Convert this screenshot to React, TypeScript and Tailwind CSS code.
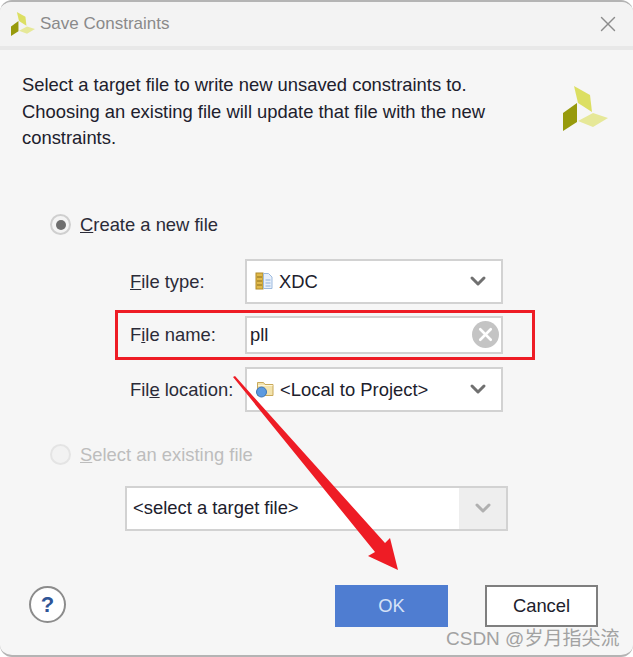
import { ChevronDown, X } from "lucide-react";
import type { ReactNode } from "react";

function Logo({ className }: { className: string }) {
  return (
    <svg className={className} viewBox="0 0 45 45">
      <polygon points="11,0 27,9 29,26 15,17" fill="#dcdf62" />
      <polygon points="14,17 14,36 0,45 0,27" fill="#979a0c" />
      <polygon points="30,27 45,32 30,41 15,35" fill="#e6e898" />
    </svg>
  );
}

function FileTypeIcon() {
  return (
    <svg className="w-[18px] h-[18px] shrink-0" viewBox="0 0 18 18">
      <rect x="1" y="1" width="7" height="16" fill="#e0b94a" stroke="#b08a28" />
      <path d="M2 5h5M2 9h5M2 13h5" stroke="#8a6c1c" />
      <path d="M8.500 1.500h5l3.500 3.500v11.500h-8.500z" fill="#e8f0fb" stroke="#9dbade" />
      <path d="M10.500 8h5M10.500 11h5M10.500 14h5" stroke="#8fb0da" />
    </svg>
  );
}

function FolderIcon() {
  return (
    <svg className="w-[19px] h-[18px] shrink-0" viewBox="0 0 19 18">
      <path d="M2.500 2.500h6l1.500 2h8v11h-15.500z" fill="#f3e3ad" stroke="#c9a95a" />
      <path d="M3 5.500h14.500" stroke="#fff6d8" />
      <circle cx="6.500" cy="12" r="5" fill="#5c9ae0" stroke="#3d75b5" />
    </svg>
  );
}

function Combo({ icon, label }: { icon: ReactNode; label: string }) {
  return (
    <div className="w-[258px] h-[45px] bg-white border-2 border-[#d2d2d2] flex items-center pl-[8px] pr-[11px]">
      {icon}
      <span className="ml-[6px] flex-1 text-[#20202c] pt-[1px]">{label}</span>
      <ChevronDown className="w-[24px] h-[24px] text-[#707070]" strokeWidth={3} />
    </div>
  );
}

function FieldLabel({ children }: { children: ReactNode }) {
  return <div className="w-[115px] pt-[1px] text-[#2b2b38]">{children}</div>;
}

export default function App() {
  return (
    <div className="relative w-[633px] h-[657px] bg-white overflow-hidden font-['Liberation_Sans',sans-serif] text-[18.400px]">
      <div className="w-[633px] h-[657px] flex flex-col bg-[#f6f6f6] rounded-[12px] border-t-2 border-b-2 border-[#b4b4b4] overflow-hidden">
        <div className="h-[44px] shrink-0 bg-[#f3f3f3] flex items-center pl-[11px] pr-[12px]">
          <Logo className="w-[24px] h-[24px]" />
          <span className="ml-[5px] flex-1 text-[#8a8a8a] text-[17px]">Save Constraints</span>
          <X className="w-[26px] h-[26px] text-[#8c8c8c]" strokeWidth={1.300} />
        </div>
        <div className="h-[4px] shrink-0 bg-[#e8e8e8]" />

        <div className="flex-1 flex flex-col">
          <div className="flex justify-between pl-[22px] pr-[25px] pt-[22px]">
            <p className="w-[500px] leading-[26.500px] text-[#20202c]">
              Select a target file to write new unsaved constraints to.
              <br />
              Choosing an existing file will update that file with the new
              <br />
              constraints.
            </p>
            <Logo className="w-[45px] h-[45px] mt-[14px] shrink-0" />
          </div>

          <div className="flex items-center mt-[61px] ml-[50px] h-[24px]">
            <span className="w-[21px] h-[21px] rounded-full border-2 border-[#cfcfcf] bg-[#f4f4f4] flex items-center justify-center">
              <span className="w-[10px] h-[10px] rounded-full bg-[#6e6e6e]" />
            </span>
            <span className="ml-[9px] text-[#2b2b38]">
              <u>C</u>reate a new file
            </span>
          </div>

          <div className="ml-[115px] mt-[22px] w-[420px] flex flex-col">
            <div className="flex items-center pl-[15px]">
              <FieldLabel>
                <u>F</u>ile type:
              </FieldLabel>
              <Combo icon={<FileTypeIcon />} label="XDC" />
            </div>
            <div className="flex items-center pl-[12px] mt-[6px] h-[50px] border-[3px] border-[#ee1c25]">
              <FieldLabel>
                F<u>i</u>le name:
              </FieldLabel>
              <div className="w-[258px] h-[38px] bg-white border-2 border-[#d2d2d2] flex items-center pl-[3px] pr-[2px]">
                <span className="flex-1 pt-[1px] text-[#20202c]">pll</span>
                <span className="w-[27px] h-[27px] rounded-full bg-[#c4c4c4] flex items-center justify-center">
                  <X className="w-[21px] h-[21px] text-white" strokeWidth={3} />
                </span>
              </div>
            </div>
            <div className="flex items-center pl-[15px] mt-[7px]">
              <FieldLabel>
                Fil<u>e</u> location:
              </FieldLabel>
              <Combo icon={<FolderIcon />} label="<Local to Project>" />
            </div>
          </div>

          <div className="flex items-center mt-[31px] ml-[50px] h-[24px]">
            <span className="w-[21px] h-[21px] rounded-full border-2 border-[#e4e4e4] bg-[#f2f2f2]" />
            <span className="ml-[9px] pt-[1px] text-[#bdbdbd]">
              <u>S</u>elect an existing file
            </span>
          </div>

          <div className="ml-[125px] mt-[19px] w-[383px] h-[45px] border-2 border-[#d2d2d2] bg-white flex items-center">
            <span className="flex-1 pl-[6px] text-[#20202c]">&lt;select a target file&gt;</span>
            <span className="w-[47px] h-full bg-[#eeeeee] flex items-center justify-center">
              <ChevronDown className="w-[24px] h-[24px] text-[#b0b0b0]" strokeWidth={3} />
            </span>
          </div>

          <div className="flex items-start mt-[54px] pl-[29px] pr-[35px]">
            <span className="w-[37px] h-[37px] mt-[1px] rounded-full border-2 border-[#8c8c8c] bg-white flex items-center justify-center font-bold text-[#2f5597] text-[22px]">
              ?
            </span>
            <button className="ml-[269px] w-[113px] h-[42px] bg-[#4f7dd1] text-[#d6e2f7]">OK</button>
            <button className="ml-[37px] w-[113px] h-[42px] bg-white border-2 border-[#7f7f7f] text-[#20202c]">
              Cancel
            </button>
          </div>
        </div>
      </div>

      <svg className="absolute inset-0 w-[633px] h-[657px] pointer-events-none" viewBox="0 0 633 657">
        <polygon points="233,377 235,376 385,543 390,538 398,570 368,556 375,552" fill="#ee1c25" />
      </svg>

      <span className="absolute left-[446px] top-[628px] text-[#a2a2a2] text-[19px] leading-[21px] font-['Liberation_Sans','Noto_Sans_CJK_SC',sans-serif]">
        CSDN @岁月指尖流
      </span>
    </div>
  );
}
